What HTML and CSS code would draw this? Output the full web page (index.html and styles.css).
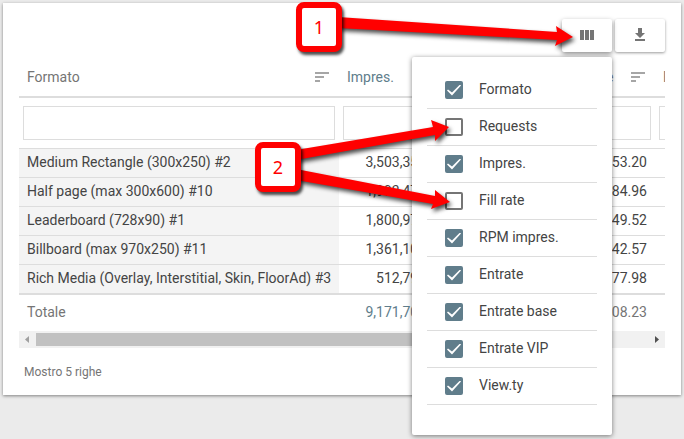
FILE: index.html
```html
<!DOCTYPE html>
<html lang="it">
<head>
<meta charset="utf-8">
<title>Report formati</title>
<link rel="stylesheet" href="styles.css">
</head>
<body>
<main class="card">
  <div class="toolbar">
    <div class="picker">
      <button class="tool tool-open" type="button" aria-label="Colonne">
        <svg width="18" height="17" viewBox="0 1 18 17"><path d="M2 4h4v10H2zM7 4h4v10H7zM12 4h4v10h-4z"/></svg>
      </button>
      <form class="menu">
        <label class="option"><input type="checkbox" checked>Formato</label>
        <label class="option"><input type="checkbox">Requests</label>
        <label class="option"><input type="checkbox" checked>Impres.</label>
        <label class="option"><input type="checkbox">Fill rate</label>
        <label class="option"><input type="checkbox" checked>RPM impres.</label>
        <label class="option"><input type="checkbox" checked>Entrate</label>
        <label class="option"><input type="checkbox" checked>Entrate base</label>
        <label class="option"><input type="checkbox" checked>Entrate VIP</label>
        <label class="option"><input type="checkbox" checked>View.ty</label>
      </form>
    </div>
    <button class="tool" type="button" aria-label="Scarica">
      <svg width="18" height="17" viewBox="0 1 18 17"><path d="M14 7h-3V2H7v5H4l5 5zM4 13v2h10v-2z"/></svg>
    </button>
  </div>
  <div class="scroller">
    <table>
      <colgroup><col class="c-name"><col class="c-impr"><col class="c-rpm"><col class="c-rev"><col class="c-base"></colgroup>
      <thead>
        <tr class="heads">
          <th><div class="head">Formato<svg width="14" height="10" viewBox="0 0 14 10"><path d="M0 0h14v2H0zM0 4h9v2H0zM0 8h5v2H0z"/></svg></div></th>
          <th><div class="head active">Impres.</div></th>
          <th></th>
          <th><div class="head">Entrate<svg width="14" height="10" viewBox="0 0 14 10"><path d="M0 0h14v2H0zM0 4h9v2H0zM0 8h5v2H0z"/></svg></div></th>
          <th><div class="head">Entrate base</div></th>
        </tr>
        <tr class="filters">
          <td><input type="text" aria-label="Filtra Formato"></td>
          <td><input type="text" aria-label="Filtra Impres."></td>
          <td><input type="text" aria-label="Filtra RPM impres."></td>
          <td><input type="text" aria-label="Filtra Entrate"></td>
          <td><input type="text" aria-label="Filtra Entrate base"></td>
        </tr>
      </thead>
      <tbody>
        <tr><td>Medium Rectangle (300x250) #2</td><td>3,503,351</td><td></td><td>53.20</td><td></td></tr>
        <tr><td>Half page (max 300x600) #10</td><td>1,993,470</td><td></td><td>84.96</td><td></td></tr>
        <tr><td>Leaderboard (728x90) #1</td><td>1,800,970</td><td></td><td>49.52</td><td></td></tr>
        <tr><td>Billboard (max 970x250) #11</td><td>1,361,100</td><td></td><td>42.57</td><td></td></tr>
        <tr><td>Rich Media (Overlay, Interstitial, Skin, FloorAd) #3</td><td>512,790</td><td></td><td>77.98</td><td></td></tr>
      </tbody>
      <tfoot>
        <tr><td>Totale</td><td class="active">9,171,700</td><td></td><td>08.23</td><td></td></tr>
      </tfoot>
    </table>
  </div>
  <div class="scrollbar">
    <svg width="17" height="17" viewBox="0 0 17 17"><path d="M10 5v7L6 8.500z" fill="#a0a0a0"/></svg>
    <div class="track"><div class="thumb"></div></div>
    <svg width="17" height="17" viewBox="0 0 17 17"><path d="M7 5v7l4-3.500z" fill="#505050"/></svg>
  </div>
  <p class="summary">Mostro 5 righe</p>
</main>
<div class="notes">
  <svg class="arrows" width="684" height="439" viewBox="0 0 684 439">
    <path d="M338 17L557 32L556 26L573 37L555 46L557 40L338 28z"/>
    <path d="M296 150L433 127L431 120L449 127L435 141L435 135L296 160z"/>
    <path d="M296 169L435 196L435 190L450 202L431 209L433 204L296 180z"/>
  </svg>
  <span class="note note-one">1</span>
  <span class="note note-two">2</span>
</div>
</body>
</html>
```

FILE: styles.css
```css
* {
  box-sizing: border-box;
}

body {
  min-height: 100vh;
  margin: 0;
  padding: 3px;
  background: #ebebeb;
  color: #444;
  font: 14px/20px Roboto, sans-serif;
}

.card {
  padding: 16px 16px 13px;
  background: #fff;
  box-shadow: 0 1px 3px rgba(0, 0, 0, 0.45);
}

/* Toolbar */

.toolbar {
  display: flex;
  justify-content: flex-end;
  gap: 3px;
  margin-bottom: 6px;
}

.picker {
  position: relative;
}

.tool {
  display: flex;
  align-items: center;
  justify-content: center;
  width: 50px;
  height: 33px;
  padding: 0;
  border: 0;
  border-radius: 2px;
  background: #fff;
  box-shadow: 0 1px 3px rgba(0, 0, 0, 0.4);
}

.tool-open {
  box-shadow: 0 2px 5px rgba(0, 0, 0, 0.45);
}

.tool svg {
  fill: #757575;
}

.head svg {
  fill: #a6a6a6;
}

/* Column menu */

.menu {
  position: absolute;
  top: 38px;
  right: 0;
  z-index: 1;
  width: 200px;
  padding: 15px 15px 30px;
  border-radius: 2px;
  background: #fff;
  box-shadow: 0 1px 5px rgba(0, 0, 0, 0.5);
}

.option {
  display: flex;
  align-items: flex-start;
  gap: 16px;
  height: 37px;
  padding: 7px 0 0 18px;
  border-bottom: 1px solid #ddd;
}

.option input {
  appearance: none;
  display: grid;
  place-items: center;
  width: 18px;
  height: 18px;
  margin: 2px 0 0;
  border: 2px solid #757575;
  border-radius: 2px;
}

.option input:checked {
  border-color: #607d8b;
  background: #607d8b;
}

.option input:checked::before {
  content: "";
  width: 14px;
  height: 11px;
  background: #fff;
  clip-path: polygon(0 6px, 1px 5px, 5px 8px, 13px 0, 14px 1px, 5px 11px);
}

/* Table */

.scroller {
  overflow: hidden;
}

table {
  width: 786px;
  table-layout: fixed;
  border-spacing: 0;
}

.c-name {
  width: 320px;
}

.c-impr {
  width: 95px;
}

.c-rpm {
  width: 127px;
}

.c-rev {
  width: 94px;
}

.c-base {
  width: 150px;
}

th {
  height: 40px;
  padding: 0 10px 0 8px;
  border-bottom: 2px solid #ddd;
  color: #757575;
  font-weight: 400;
}

.head {
  display: flex;
  align-items: center;
  justify-content: space-between;
  white-space: nowrap;
}

td {
  height: 29px;
  padding: 0 8px 2px;
  border-bottom: 1px solid #ddd;
  text-align: right;
  white-space: nowrap;
}

td:first-child {
  text-align: left;
}

.filters td {
  height: 51px;
  padding: 0 4px;
}

.filters input {
  display: block;
  width: 100%;
  height: 34px;
  padding: 0 8px;
  border: 1px solid #ddd;
  background: #fff;
  font: inherit;
}

tbody td:first-child {
  background: #f4f4f4;
}

tbody tr:last-child td {
  height: 30px;
  border-bottom-width: 2px;
}

tfoot td {
  height: 36px;
  border-bottom: 0;
  color: #757575;
}

.head.active,
td.active {
  color: #607d8b;
}

.scrollbar {
  display: flex;
  background: #f1f1f1;
}

.track {
  flex: 1;
  padding: 2px 0;
}

.thumb {
  width: 85%;
  height: 13px;
  background: #c1c1c1;
}

.summary {
  margin: 14px 0 0;
  padding-left: 5px;
  color: #757575;
  font-size: 12px;
}

/* Callouts pinned over the page */

.arrows {
  position: absolute;
  top: 0;
  left: 0;
  z-index: 2;
  fill: #f00;
  filter: drop-shadow(2px 3px 2px rgba(0, 0, 0, 0.7));
  pointer-events: none;
}

.note {
  position: absolute;
  z-index: 3;
  display: grid;
  place-items: center;
  width: 46px;
  height: 50px;
  border: 6px solid #f00;
  border-radius: 8px;
  background: #fff;
  box-shadow: 2px 3px 3px rgba(0, 0, 0, 0.7);
  color: #f00;
  font: 18px/24px "Noto Sans", sans-serif;
}

.note-one {
  top: 2px;
  left: 296px;
}

.note-two {
  top: 142px;
  left: 255px;
}
```
